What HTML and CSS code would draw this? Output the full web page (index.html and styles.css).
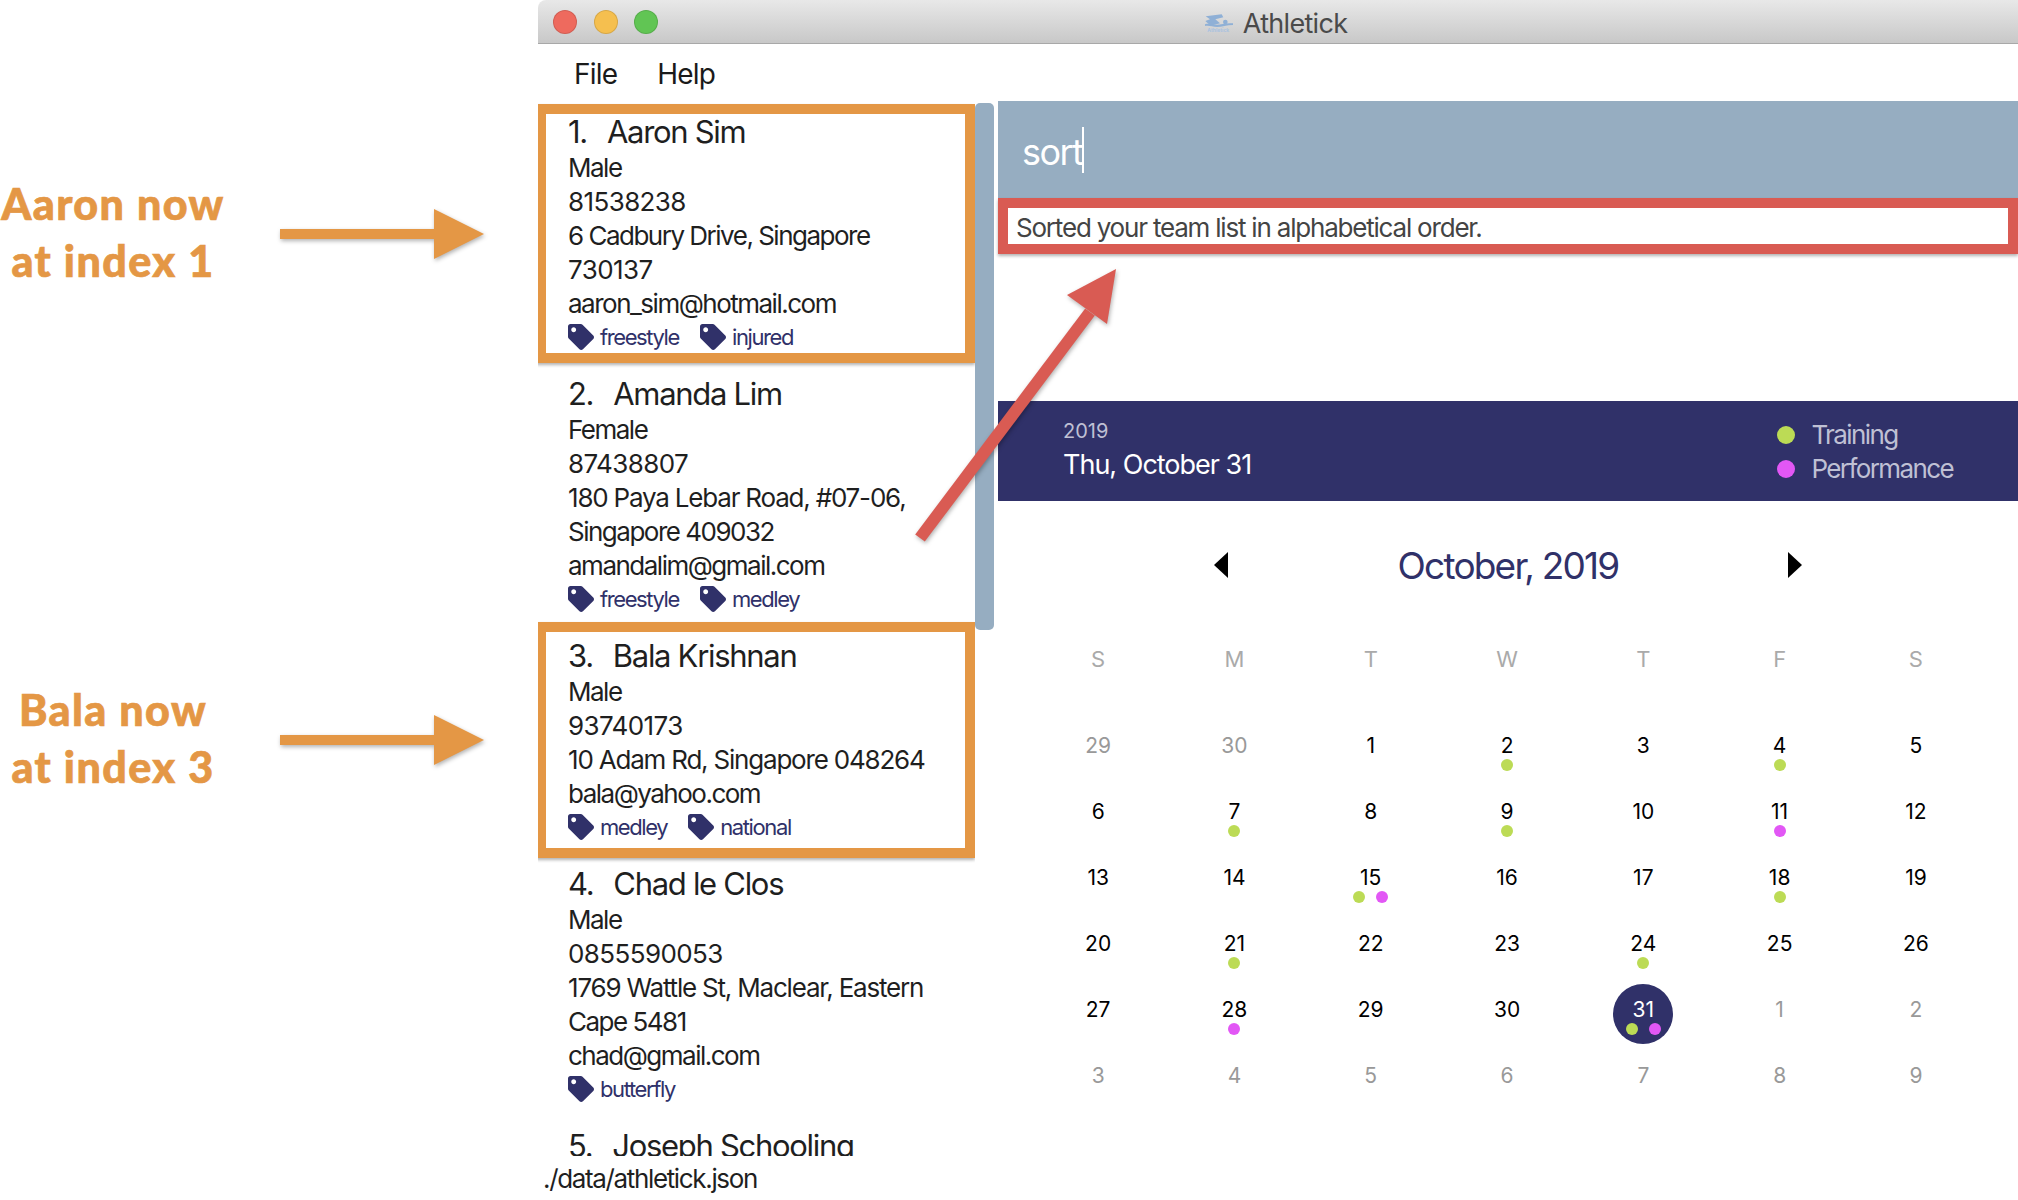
FILE: index.html
```html
<!DOCTYPE html>
<html lang="en">
<head>
  <meta charset="UTF-8">
  <title>Athletick - sort</title>
  <link rel="stylesheet" href="styles.css">
</head>
<body>
  <div class="page">
    <!-- notes down the left side -->
    <div class="notes">
      <div class="note">
        <div class="note-text">Aaron now<br>at index 1</div>
        <svg class="note-arrow" width="206" height="52" viewBox="0 0 206 52"><path d="M0 21h154V1l50 25-50 25V31H0z"/></svg>
      </div>
      <div class="note note-second">
        <div class="note-text">Bala now<br>at index 3</div>
        <svg class="note-arrow" width="206" height="52" viewBox="0 0 206 52"><path d="M0 21h154V1l50 25-50 25V31H0z"/></svg>
      </div>
    </div>

    <div class="window">
      <div class="titlebar">
        <div class="lights">
          <span class="light light-red"></span>
          <span class="light light-yellow"></span>
          <span class="light light-green"></span>
        </div>
        <div class="title">
          <svg class="title-icon" width="30" height="19" viewBox="0 0 90 57">
            <path d="M5 7l48-6 5 9-24 6 14 12-28 7-16-14 14-5z"/>
            <circle cx="64" cy="24" r="7"/>
            <path d="M3 31c14-4 24 2 36 1s30-6 48-4v5c-18 0-34 6-48 6s-22-5-36-3z"/>
            <text x="10" y="54" class="title-icon-text">Athletick</text>
          </svg>
          <span>Athletick</span>
        </div>
      </div>
      <div class="menubar">
        <span class="menu-item">File</span>
        <span class="menu-item">Help</span>
      </div>

      <div class="main">
        <div class="left-pane">
          <div class="list-wrap">
            <div class="list">
              <div class="card card-marked">
                <div class="card-name"><span class="card-index">1.</span>Aaron Sim</div>
                <div class="card-line">Male</div>
                <div class="card-line digits">81538238</div>
                <div class="card-line">6 Cadbury Drive, Singapore<br><span class="digits">730137</span></div>
                <div class="card-line">aaron_sim@hotmail.com</div>
                <div class="tags">
                  <span class="tag"><svg class="tag-icon" viewBox="0 0 512 512"><use href="#tag"/></svg>freestyle</span>
                  <span class="tag"><svg class="tag-icon" viewBox="0 0 512 512"><use href="#tag"/></svg>injured</span>
                </div>
              </div>
              <div class="card">
                <div class="card-name"><span class="card-index">2.</span>Amanda Lim</div>
                <div class="card-line">Female</div>
                <div class="card-line digits">87438807</div>
                <div class="card-line"><span class="mixed">180 Paya Lebar Road, #07-06,</span><br>Singapore 409032</div>
                <div class="card-line">amandalim@gmail.com</div>
                <div class="tags">
                  <span class="tag"><svg class="tag-icon" viewBox="0 0 512 512"><use href="#tag"/></svg>freestyle</span>
                  <span class="tag"><svg class="tag-icon" viewBox="0 0 512 512"><use href="#tag"/></svg>medley</span>
                </div>
              </div>
              <div class="card card-marked card-short">
                <div class="card-name"><span class="card-index">3.</span>Bala Krishnan</div>
                <div class="card-line">Male</div>
                <div class="card-line digits">93740173</div>
                <div class="card-line mixed">10 Adam Rd, Singapore 048264</div>
                <div class="card-line">bala@yahoo.com</div>
                <div class="tags">
                  <span class="tag"><svg class="tag-icon" viewBox="0 0 512 512"><use href="#tag"/></svg>medley</span>
                  <span class="tag"><svg class="tag-icon" viewBox="0 0 512 512"><use href="#tag"/></svg>national</span>
                </div>
              </div>
              <div class="card">
                <div class="card-name"><span class="card-index">4.</span>Chad le Clos</div>
                <div class="card-line">Male</div>
                <div class="card-line digits">0855590053</div>
                <div class="card-line"><span class="mixed">1769 Wattle St, Maclear, Eastern</span><br>Cape 5481</div>
                <div class="card-line">chad@gmail.com</div>
                <div class="tags">
                  <span class="tag"><svg class="tag-icon" viewBox="0 0 512 512"><use href="#tag"/></svg>butterfly</span>
                </div>
              </div>
              <div class="card">
                <div class="card-name"><span class="card-index">5.</span>Joseph Schooling</div>
              </div>
            </div>
            <div class="scrollbar"></div>
          </div>
          <div class="status">./data/athletick.json</div>
        </div>

        <div class="right-pane">
          <div class="command"><span class="command-text">sort</span><span class="caret"></span></div>
          <div class="result">Sorted your team list in alphabetical order.</div>
          <div class="spacer"></div>

          <div class="band">
            <div class="band-left">
              <div class="band-year">2019</div>
              <div class="band-date">Thu, October 31</div>
            </div>
            <div class="legend">
              <div class="legend-row"><span class="legend-dot dot-green"></span>Training</div>
              <div class="legend-row"><span class="legend-dot dot-pink"></span>Performance</div>
            </div>
          </div>

          <div class="month-nav">
            <svg class="month-arrow" width="14" height="26" viewBox="0 0 14 26"><path d="M14 0v26L0 13z"/></svg>
            <div class="month-name">October, 2019</div>
            <svg class="month-arrow" width="14" height="26" viewBox="0 0 14 26"><path d="M0 0v26l14-13z"/></svg>
          </div>

          <div class="calendar">
            <div class="weekday">S</div><div class="weekday">M</div><div class="weekday">T</div><div class="weekday">W</div><div class="weekday">T</div><div class="weekday">F</div><div class="weekday">S</div>

            <div class="cell"><div class="day other">29</div></div>
            <div class="cell"><div class="day other">30</div></div>
            <div class="cell"><div class="day">1</div></div>
            <div class="cell"><div class="day">2<div class="dots"><i class="dot dot-green"></i></div></div></div>
            <div class="cell"><div class="day">3</div></div>
            <div class="cell"><div class="day">4<div class="dots"><i class="dot dot-green"></i></div></div></div>
            <div class="cell"><div class="day">5</div></div>

            <div class="cell"><div class="day">6</div></div>
            <div class="cell"><div class="day">7<div class="dots"><i class="dot dot-green"></i></div></div></div>
            <div class="cell"><div class="day">8</div></div>
            <div class="cell"><div class="day">9<div class="dots"><i class="dot dot-green"></i></div></div></div>
            <div class="cell"><div class="day">10</div></div>
            <div class="cell"><div class="day">11<div class="dots"><i class="dot dot-pink"></i></div></div></div>
            <div class="cell"><div class="day">12</div></div>

            <div class="cell"><div class="day">13</div></div>
            <div class="cell"><div class="day">14</div></div>
            <div class="cell"><div class="day">15<div class="dots"><i class="dot dot-green"></i><i class="dot dot-pink"></i></div></div></div>
            <div class="cell"><div class="day">16</div></div>
            <div class="cell"><div class="day">17</div></div>
            <div class="cell"><div class="day">18<div class="dots"><i class="dot dot-green"></i></div></div></div>
            <div class="cell"><div class="day">19</div></div>

            <div class="cell"><div class="day">20</div></div>
            <div class="cell"><div class="day">21<div class="dots"><i class="dot dot-green"></i></div></div></div>
            <div class="cell"><div class="day">22</div></div>
            <div class="cell"><div class="day">23</div></div>
            <div class="cell"><div class="day">24<div class="dots"><i class="dot dot-green"></i></div></div></div>
            <div class="cell"><div class="day">25</div></div>
            <div class="cell"><div class="day">26</div></div>

            <div class="cell"><div class="day">27</div></div>
            <div class="cell"><div class="day">28<div class="dots"><i class="dot dot-pink"></i></div></div></div>
            <div class="cell"><div class="day">29</div></div>
            <div class="cell"><div class="day">30</div></div>
            <div class="cell"><div class="day today">31<div class="dots"><i class="dot dot-green"></i><i class="dot dot-pink"></i></div></div></div>
            <div class="cell"><div class="day other">1</div></div>
            <div class="cell"><div class="day other">2</div></div>

            <div class="cell"><div class="day other">3</div></div>
            <div class="cell"><div class="day other">4</div></div>
            <div class="cell"><div class="day other">5</div></div>
            <div class="cell"><div class="day other">6</div></div>
            <div class="cell"><div class="day other">7</div></div>
            <div class="cell"><div class="day other">8</div></div>
            <div class="cell"><div class="day other">9</div></div>
          </div>
        </div>
      </div>
    </div>

    <!-- red arrow drawn over the window -->
    <svg class="red-arrow" width="2018" height="1200" viewBox="0 0 2018 1200">
      <path d="M920 538L1090 312" stroke="#d95b53" stroke-width="12" fill="none"/>
      <path d="M1116 269l-49 26 40 29z" fill="#d95b53"/>
    </svg>
  </div>

  <svg class="icon-defs" width="0" height="0">
    <symbol id="tag" viewBox="0 0 512 512">
      <path fill-rule="evenodd" d="M0 252.118V48C0 21.49 21.49 0 48 0h204.118a48 48 0 0 1 33.941 14.059l211.882 211.882c18.745 18.745 18.745 49.137 0 67.882L293.823 497.941c-18.745 18.745-49.137 18.745-67.882 0L14.059 286.059A48 48 0 0 1 0 252.118zM112 64c-26.51 0-48 21.49-48 48s21.49 48 48 48 48-21.49 48-48-21.49-48-48-48z"/>
    </symbol>
  </svg>
</body>
</html>
```
FILE: styles.css
```css
/* Athletick screenshot with notes on top */
body {
  margin: 0;
  background-color: #ffffff;
  font-family: Inter, "Liberation Sans", sans-serif;
}
.page {
  position: relative;
  display: flex;
  width: 2018px;
  height: 1200px;
  overflow: hidden;
}
.icon-defs {
  position: absolute;
}

/* left notes */
.notes {
  width: 538px;
  flex-shrink: 0;
  padding-top: 174px;
  box-sizing: border-box;
}
.note {
  display: flex;
  align-items: center;
  height: 120px;
}
.note-second {
  margin-top: 386px;
}
.note-text {
  width: 226px;
  margin-top: -5px;
  text-align: center;
  font-family: Lato, sans-serif;
  font-weight: 900;
  font-size: 43px;
  line-height: 57px;
  letter-spacing: 1.4px;
  color: #e49745;
  -webkit-text-stroke: 0.7px #e49745;
}
.note-arrow {
  margin-left: 54px;
  fill: #e49745;
  filter: drop-shadow(1px 2px 2px rgba(0, 0, 0, 0.3));
}
.red-arrow {
  position: absolute;
  left: 0;
  top: 0;
  pointer-events: none;
  filter: drop-shadow(1px 2px 2px rgba(0, 0, 0, 0.3));
}

/* window chrome */
.window {
  flex: 1;
  display: flex;
  flex-direction: column;
  min-width: 0;
}
.titlebar {
  position: relative;
  display: flex;
  align-items: center;
  justify-content: center;
  height: 44px;
  flex-shrink: 0;
  box-sizing: border-box;
  background: linear-gradient(#e8e8e8, #c8c8c8);
  border-bottom: 1px solid #a8a8a8;
  border-top-left-radius: 8px;
}
.lights {
  position: absolute;
  left: 15px;
  top: 10px;
  display: flex;
  gap: 16.5px;
}
.light {
  width: 24px;
  height: 24px;
  border-radius: 50%;
  box-sizing: border-box;
  border: 1px solid rgba(0, 0, 0, 0.12);
}
.light-red { background-color: #ee6a5e; }
.light-yellow { background-color: #f5bf4f; }
.light-green { background-color: #61c554; }
.title {
  display: flex;
  align-items: center;
  gap: 9px;
  margin-top: 3px;
  margin-left: -5px;
  font-size: 27px;
  letter-spacing: -0.7px;
  color: #4a4a4a;
}
.title-icon {
  fill: #8fb0d6;
}
.title-icon-text {
  font-size: 15px;
  font-weight: 700;
  letter-spacing: 0;
  fill: #a9c2e0;
}
.menubar {
  display: flex;
  align-items: center;
  gap: 40px;
  height: 57px;
  padding-top: 2px;
  box-sizing: border-box;
  flex-shrink: 0;
  padding-left: 36px;
  font-size: 28px;
  letter-spacing: -0.8px;
  color: #1a1a1a;
}

.main {
  flex: 1;
  display: flex;
  min-height: 0;
}

/* person list */
.left-pane {
  width: 460px;
  flex-shrink: 0;
  display: flex;
  flex-direction: column;
}
.list-wrap {
  flex: 1;
  min-height: 0;
  display: flex;
}
.list {
  width: 437px;
  flex-shrink: 0;
  padding-top: 13px;
  box-sizing: border-box;
  overflow: hidden;
}
.scrollbar {
  width: 19px;
  height: 527px;
  margin-top: 2px;
  border-radius: 5px;
  background-color: #96adc1;
}
.card {
  position: relative;
  height: 262px;
  padding-left: 30px;
  box-sizing: border-box;
  font-size: 26px;
  line-height: 34px;
  letter-spacing: -1.5px;
  color: #1f1f1f;
}
.card-short {
  height: 228px;
}
.card-marked::after {
  content: "";
  position: absolute;
  left: -2px;
  right: 0;
  top: -10px;
  bottom: 13px;
  border: 10px solid #e49745;
  box-shadow: 0 2px 3px rgba(0, 0, 0, 0.3);
}
.card-short::after {
  top: -16px;
  bottom: 8px;
}
.digits {
  letter-spacing: -0.6px;
}
.mixed {
  letter-spacing: -1.2px;
}
.card-name {
  margin-bottom: 2px;
  font-size: 31px;
  line-height: 35px;
  letter-spacing: -1.3px;
}
.card-index {
  margin-right: 20px;
}
.tags {
  display: flex;
  gap: 21px;
  height: 32px;
  align-items: center;
}
.tag {
  display: flex;
  align-items: center;
  gap: 6px;
  font-size: 22px;
  letter-spacing: -1.4px;
  color: #303169;
}
.tag-icon {
  width: 26px;
  height: 26px;
  fill: #303169;
}
.status {
  height: 44px;
  flex-shrink: 0;
  padding-left: 5px;
  font-size: 26px;
  line-height: 46px;
  letter-spacing: -1.35px;
  color: #1f1f1f;
}

/* command box and result */
.right-pane {
  flex: 1;
  min-width: 0;
  display: flex;
  flex-direction: column;
}
.command {
  display: flex;
  align-items: center;
  height: 97px;
  flex-shrink: 0;
  padding-left: 24px;
  background-color: #96adc1;
  font-size: 36px;
  letter-spacing: -1.6px;
  color: #ffffff;
}
.command-text {
  margin-top: 4px;
}
.caret {
  width: 2px;
  height: 46px;
  background-color: #ffffff;
}
.result {
  height: 56px;
  flex-shrink: 0;
  box-sizing: border-box;
  border: 10px solid #d95b53;
  padding-left: 8px;
  font-size: 26px;
  line-height: 39px;
  letter-spacing: -1.2px;
  color: #444444;
  box-shadow: 0 2px 3px rgba(0, 0, 0, 0.3);
}
.spacer {
  height: 147px;
  flex-shrink: 0;
}

/* navy band */
.band {
  display: flex;
  align-items: center;
  justify-content: space-between;
  height: 100px;
  flex-shrink: 0;
  padding: 0 65px;
  background-color: #303169;
}
.band-left {
  margin-top: -3px;
}
.band-year {
  font-size: 20px;
  line-height: 30px;
  color: #bfc0d4;
}
.band-date {
  font-size: 27px;
  line-height: 37px;
  letter-spacing: -1px;
  color: #ffffff;
}
.legend {
  padding-top: 1px;
  font-size: 26px;
  line-height: 34px;
  letter-spacing: -1.6px;
  color: #bfc0d4;
}
.legend-row {
  display: flex;
  align-items: center;
  gap: 16px;
}
.legend-dot {
  width: 18px;
  height: 18px;
  border-radius: 50%;
}
.dot-green { background-color: #bcdb55; }
.dot-pink { background-color: #e257f5; }

/* calendar */
.month-nav {
  display: flex;
  align-items: center;
  justify-content: center;
  gap: 149px;
  height: 128px;
  flex-shrink: 0;
}
.month-name {
  width: 262px;
  text-align: center;
  font-size: 37px;
  letter-spacing: -1.8px;
  color: #303169;
}
.calendar {
  display: grid;
  grid-template-columns: repeat(7, 136.3px);
  padding-left: 32px;
}
.weekday {
  height: 94px;
  padding-top: 16px;
  box-sizing: border-box;
  text-align: center;
  font-size: 22px;
  line-height: 28px;
  color: #aaaaaa;
}
.cell {
  display: flex;
  justify-content: center;
  height: 66px;
}
.day {
  display: flex;
  flex-direction: column;
  align-items: center;
  width: 60px;
  height: 60px;
  margin-top: -3px;
  padding-top: 13px;
  box-sizing: border-box;
  border-radius: 50%;
  font-size: 21px;
  line-height: 26px;
  color: #000000;
}
.day.other {
  color: #999999;
}
.day.today {
  background-color: #303169;
  color: #ffffff;
}
.dots {
  display: flex;
  gap: 11px;
}
.dot {
  width: 12px;
  height: 12px;
  border-radius: 50%;
}
```
